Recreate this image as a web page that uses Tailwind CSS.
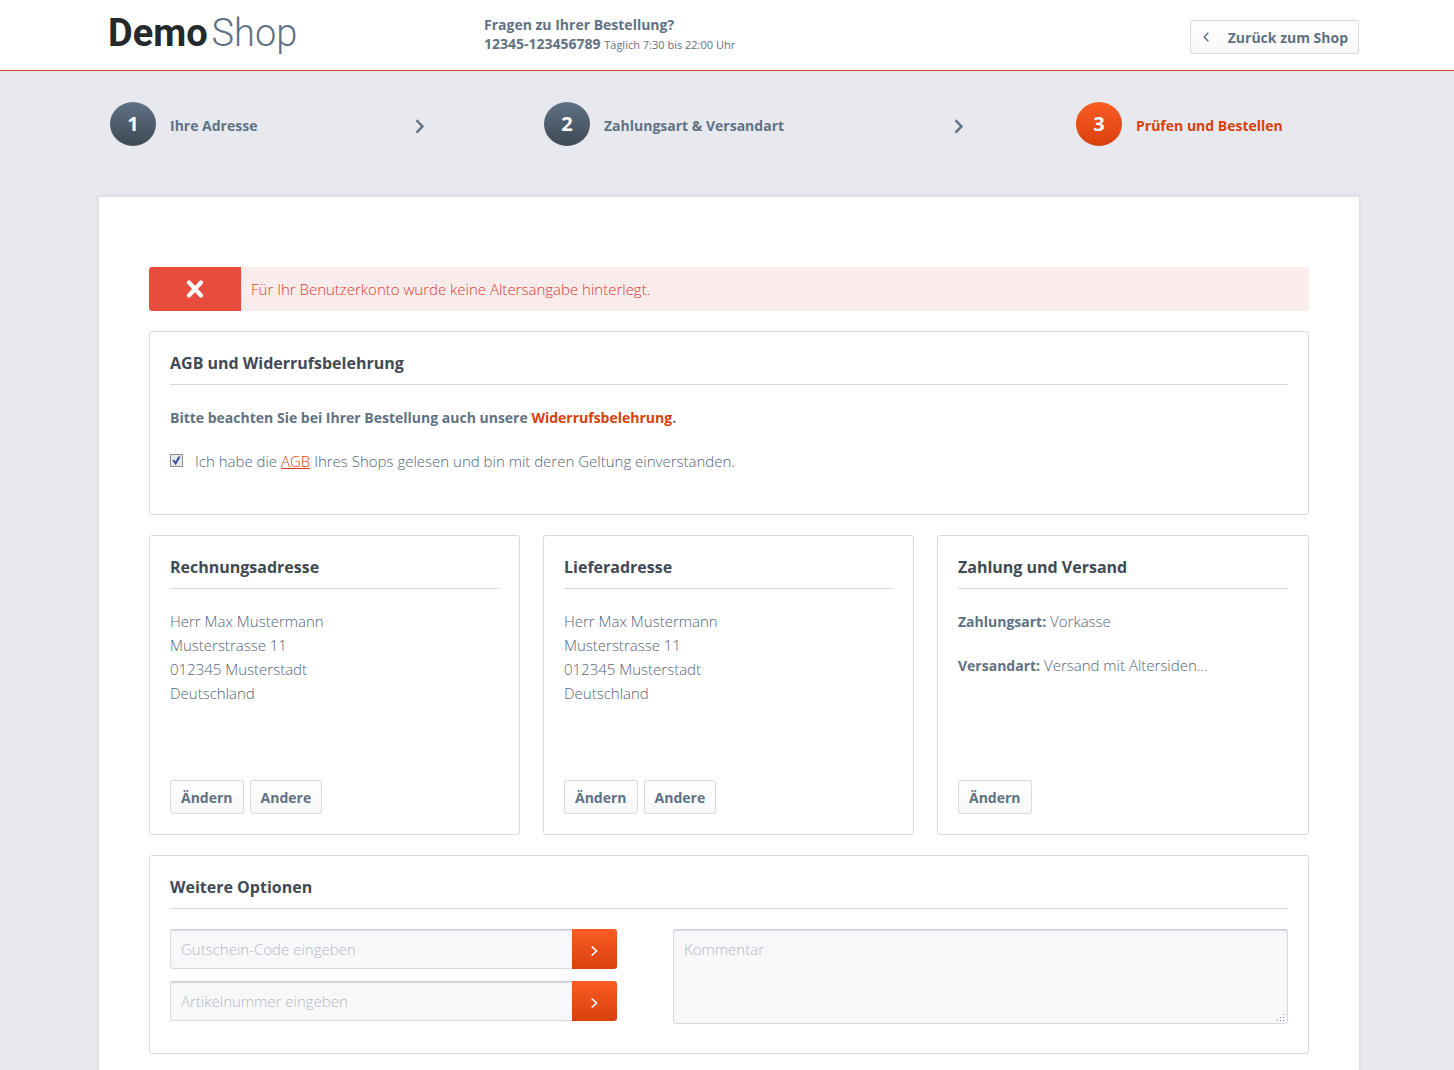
<!DOCTYPE html>
<html lang="de">
<head>
<meta charset="utf-8">
<meta name="viewport" content="width=device-width, initial-scale=1">
<title>DemoShop – Prüfen und Bestellen</title>
<script src="https://cdn.jsdelivr.net/npm/@tailwindcss/browser@4"></script>
</head>
<body class="min-h-screen bg-[#e8e9ee] font-['Open_Sans',sans-serif] text-sm leading-6 text-[#5f7285]">

<header class="border-b border-[#d0401c] bg-white pl-1">
  <div class="mx-auto flex h-[70px] max-w-[1260px] items-start">
    <a href="#" class="flex w-[385px] items-baseline gap-1 pt-2 pl-[9px] font-['Roboto',sans-serif] text-[38px] leading-[50px] text-[#5f7285]"><span class="font-bold text-[#26292c]">Demo</span><span class="font-light">Shop</span></a>
    <div class="flex-1 pt-[15px] leading-[19px]">
      <p class="font-bold">Fragen zu Ihrer Bestellung?</p>
      <p><strong>12345-123456789</strong> <span class="text-[11px]">Täglich 7:30 bis 22:00 Uhr</span></p>
    </div>
    <button type="button" class="mt-5 flex h-[34px] items-center rounded-[3px] border border-[#d8dae2] bg-linear-to-b from-white to-[#f8f8fa] pr-[10px] pl-3 font-bold">
      <svg class="mr-[19px]" width="6" height="10" viewBox="0 0 6 10" fill="none" stroke="currentColor" stroke-width="1.5" aria-hidden="true"><path d="M5.3.7 1.2 5l4.1 4.3"/></svg>
      <span class="pt-[2px]">Zurück zum Shop</span>
    </button>
  </div>
</header>

<div class="pl-1">
  <ol class="mx-auto grid max-w-[1260px] grid-cols-[434fr_532fr_283fr] pt-[31px] pl-[11px] font-bold">
    <li class="flex items-center pr-[119px]">
      <span class="flex h-11 w-[46px] items-center justify-center rounded-[50%] bg-linear-to-b from-[#5f7285] to-[#3f4a54] text-xl text-white">1</span>
      <span class="mt-1 ml-[14px] flex-1">Ihre Adresse</span>
      <svg class="mt-1" width="10" height="16" viewBox="0 0 10 16" fill="none" stroke="currentColor" stroke-width="2.4" aria-hidden="true"><path d="m1.5 2.2 6 6.2-6 6.2"/></svg>
    </li>
    <li class="flex items-center pr-28">
      <span class="flex h-11 w-[46px] items-center justify-center rounded-[50%] bg-linear-to-b from-[#5f7285] to-[#3f4a54] text-xl text-white">2</span>
      <span class="mt-1 ml-[14px] flex-1">Zahlungsart &amp; Versandart</span>
      <svg class="mt-1" width="10" height="16" viewBox="0 0 10 16" fill="none" stroke="currentColor" stroke-width="2.4" aria-hidden="true"><path d="m1.5 2.2 6 6.2-6 6.2"/></svg>
    </li>
    <li class="flex items-center text-[#d9400b]" aria-current="step">
      <span class="flex h-11 w-[46px] items-center justify-center rounded-[50%] bg-linear-to-b from-[#fa5c23] to-[#d9400b] text-xl text-white">3</span>
      <span class="mt-1 ml-[14px] flex-1">Prüfen und Bestellen</span>
    </li>
  </ol>

  <main class="mx-auto mt-[51px] max-w-[1260px] space-y-5 bg-white px-[50px] pt-[70px] pb-16 shadow-[0_0_4px_1px_#d8dae3]">
    <div role="alert" class="flex h-11 items-stretch overflow-hidden rounded-[3px] bg-[#faeceb] text-[#e74c3c]">
      <span class="flex w-[92px] items-center justify-center bg-[#e74c3c]">
        <svg width="18" height="18" viewBox="0 0 18 18" fill="none" stroke="#fff" stroke-width="4.2" stroke-linecap="round" aria-hidden="true"><path d="m3 2.5 12 13M15 2.5l-12 13"/></svg>
      </span>
      <p class="flex items-center px-[10px] text-[15px] font-[330] text-[#dc4030]">Für Ihr Benutzerkonto wurde keine Altersangabe hinterlegt.</p>
    </div>

    <section class="h-[184px] rounded-[3px] border border-[#d8dae2] p-5 pt-[19px]">
      <h2 class="border-b border-[#d8d9dd] pb-2 text-base font-bold text-[#3f4a54] leading-[25px]">AGB und Widerrufsbelehrung</h2>
      <p class="mt-[21px] font-bold">Bitte beachten Sie bei Ihrer Bestellung auch unsere <a href="#" class="text-[#d9400b]">Widerrufsbelehrung</a>.</p>
      <div class="mt-[19px] flex items-start">
        <input id="agb" type="checkbox" checked class="mt-[5px] mr-3 size-[13px] appearance-none border border-[#8e8f8f] bg-[#e6e8ec] bg-[url('data:image/svg+xml,%3Csvg%20xmlns=%22http://www.w3.org/2000/svg%22%20viewBox=%220%200%2011%2011%22%3E%3Cpath%20d=%22M2.3%205%204.6%208.3%208.6%201.5%22%20fill=%22none%22%20stroke=%22%233c4f96%22%20stroke-width=%222%22/%3E%3C/svg%3E')]">
        <label for="agb" class="text-[15px] font-[330] text-[#526578]">Ich habe die <a href="#" class="text-[#d9400b] underline">AGB</a> Ihres Shops gelesen und bin mit deren Geltung einverstanden.</label>
      </div>
    </section>

    <div class="grid grid-cols-[371fr_371fr_372fr] gap-[23px]">
      <section class="flex h-[300px] flex-col rounded-[3px] border border-[#d8dae2] p-5 pt-[19px]">
        <h2 class="border-b border-[#d8d9dd] pb-2 text-base font-bold text-[#3f4a54] leading-[25px]">Rechnungsadresse</h2>
        <address class="mt-5 flex-1 text-[15px] font-[330] text-[#526578] not-italic">Herr Max Mustermann<br>Musterstrasse 11<br>012345 Musterstadt<br>Deutschland</address>
        <div class="flex gap-[6px]">
          <button type="button" class="h-[34px] rounded-[3px] border border-[#d8dae2] bg-linear-to-b from-white to-[#f8f8fa] px-[10px] pt-[2px] font-bold">Ändern</button>
          <button type="button" class="h-[34px] rounded-[3px] border border-[#d8dae2] bg-linear-to-b from-white to-[#f8f8fa] px-[10px] pt-[2px] font-bold">Andere</button>
        </div>
      </section>
      <section class="flex h-[300px] flex-col rounded-[3px] border border-[#d8dae2] p-5 pt-[19px]">
        <h2 class="border-b border-[#d8d9dd] pb-2 text-base font-bold text-[#3f4a54] leading-[25px]">Lieferadresse</h2>
        <address class="mt-5 flex-1 text-[15px] font-[330] text-[#526578] not-italic">Herr Max Mustermann<br>Musterstrasse 11<br>012345 Musterstadt<br>Deutschland</address>
        <div class="flex gap-[6px]">
          <button type="button" class="h-[34px] rounded-[3px] border border-[#d8dae2] bg-linear-to-b from-white to-[#f8f8fa] px-[10px] pt-[2px] font-bold">Ändern</button>
          <button type="button" class="h-[34px] rounded-[3px] border border-[#d8dae2] bg-linear-to-b from-white to-[#f8f8fa] px-[10px] pt-[2px] font-bold">Andere</button>
        </div>
      </section>
      <section class="flex h-[300px] flex-col rounded-[3px] border border-[#d8dae2] p-5 pt-[19px]">
        <h2 class="border-b border-[#d8d9dd] pb-2 text-base font-bold text-[#3f4a54] leading-[25px]">Zahlung und Versand</h2>
        <div class="mt-5 flex-1 space-y-5 text-[15px] font-[330] text-[#526578]">
          <p><strong class="text-sm leading-4 font-bold text-[#5f7285]">Zahlungsart:</strong> Vorkasse</p>
          <p><strong class="text-sm leading-4 font-bold text-[#5f7285]">Versandart:</strong> Versand mit Altersiden...</p>
        </div>
        <div class="flex">
          <button type="button" class="h-[34px] rounded-[3px] border border-[#d8dae2] bg-linear-to-b from-white to-[#f8f8fa] px-[10px] pt-[2px] font-bold">Ändern</button>
        </div>
      </section>
    </div>

    <section class="h-[199px] rounded-[3px] border border-[#d8dae2] p-5 pt-[19px]">
      <h2 class="border-b border-[#d8d9dd] pb-2 text-base font-bold text-[#3f4a54] leading-[25px]">Weitere Optionen</h2>
      <div class="mt-5 grid grid-cols-[40%_55%] justify-between">
        <div class="space-y-3">
          <form class="flex h-10">
            <input type="text" aria-label="Gutschein-Code" placeholder="Gutschein-Code eingeben" class="min-w-0 flex-1 rounded-l-[3px] border border-r-0 border-[#d8dae2] border-t-[#c8cad4] bg-[#f8f8fa] px-[10px] text-[15px] font-[330] shadow-[inset_0_1px_1px_#dadae5] placeholder:text-[#b0bac5]">
            <button type="button" aria-label="Gutschein einlösen" class="flex w-[45px] items-center justify-center rounded-r-[3px] bg-linear-to-b from-[#fa5c23] to-[#d9400b] text-white"><svg class="mt-1" width="8" height="12" viewBox="0 0 8 12" fill="none" stroke="currentColor" stroke-width="1.7" aria-hidden="true"><path d="M.7 1.5 5.5 6 .7 10.5"/></svg></button>
          </form>
          <form class="flex h-10">
            <input type="text" aria-label="Artikelnummer" placeholder="Artikelnummer eingeben" class="min-w-0 flex-1 rounded-l-[3px] border border-r-0 border-[#d8dae2] border-t-[#c8cad4] bg-[#f8f8fa] px-[10px] text-[15px] font-[330] shadow-[inset_0_1px_1px_#dadae5] placeholder:text-[#b0bac5]">
            <button type="button" aria-label="Artikel hinzufügen" class="flex w-[45px] items-center justify-center rounded-r-[3px] bg-linear-to-b from-[#fa5c23] to-[#d9400b] text-white"><svg class="mt-1" width="8" height="12" viewBox="0 0 8 12" fill="none" stroke="currentColor" stroke-width="1.7" aria-hidden="true"><path d="M.7 1.5 5.5 6 .7 10.5"/></svg></button>
          </form>
        </div>
        <div class="relative">
          <textarea aria-label="Kommentar" placeholder="Kommentar" class="block h-[95px] w-full resize-none rounded-[3px] border border-[#d8dae2] border-t-[#c8cad4] bg-[#f8f8fa] px-[10px] py-[7px] text-[15px] font-[330] shadow-[inset_0_1px_1px_#dadae5] placeholder:text-[#b0bac5]"></textarea>
          <svg class="pointer-events-none absolute right-[3px] bottom-[2px]" width="8" height="8" viewBox="0 0 8 8" fill="#8a8c93" aria-hidden="true"><path d="M6 0h1v1H6zM3 3h1v1H3zM6 3h1v1H6zM0 6h1v1H0zM3 6h1v1H3zM6 6h1v1H6z"/></svg>
        </div>
      </div>
    </section>
  </main>
</div>
</body>
</html>
